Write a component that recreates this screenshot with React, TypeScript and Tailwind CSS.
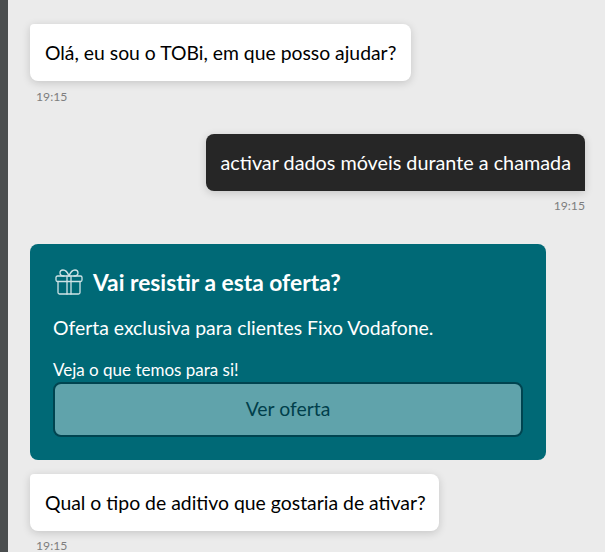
const font = "font-['Lato','Noto_Sans',sans-serif]";

function GiftIcon() {
  return (
    <svg width="30" height="28" viewBox="0 0 30 28" fill="none" stroke="#cfe3e6" strokeWidth="1.3" strokeLinejoin="round" strokeLinecap="round">
      <rect x="2" y="8" width="26" height="5.5" rx="1.5" />
      <path d="M4 13.5V24.5a1.5 1.5 0 0 0 1.5 1.500h19a1.500 1.500 0 0 0 1.500-1.500V13.500" />
      <path d="M13 8v18M17 8v18" />
      <path d="M15 8C13.500 4 11 2 9 2 7.200 2 6 3.300 6 5c0 2 2 3 4 3" />
      <path d="M15 8c1.500-4 4-6 6-6 1.800 0 3 1.300 3 3 0 2-2 3-4 3" />
    </svg>
  );
}

export default function App() {
  return (
    <div className={`flex h-[552px] w-[605px] overflow-hidden bg-[#ebebeb] ${font}`}>
      <div className="w-2 shrink-0 bg-[#4a4d4e]" />
      <div className="flex min-w-0 flex-1 flex-col pl-[22px] pt-6">
        <div className="flex h-[57px] w-fit shrink-0 items-center rounded-b-lg rounded-tr-lg rounded-tl-sm bg-white px-[15px] text-[19.35px] text-black shadow-[0_2px_8px_rgba(0,0,0,0.16)]">
          Olá, eu sou o TOBi, em que posso ajudar?
        </div>
        <div className="ml-1.5 mt-2 shrink-0 text-[12.2px] leading-[15px] text-[#7e7e7e]">19:15</div>

        <div className="mt-[30px] flex shrink-0 flex-col items-end pr-5">
          <div className="flex h-[57px] w-fit items-center rounded-t-lg rounded-bl-lg bg-[#262626] px-3.5 text-[19.8px] text-white shadow-[0_2px_8px_rgba(0,0,0,0.16)]">
            activar dados móveis durante a chamada
          </div>
          <div className="mt-[7px] text-[12.2px] leading-[15px] text-[#7e7e7e]">19:15</div>
        </div>

        <div className="mt-[31px] h-[216px] w-[516px] shrink-0 rounded-lg bg-[#006976] px-[23px] pt-6 text-white">
          <div className="flex items-center gap-[9px] pl-px">
            <GiftIcon />
            <span className="text-[22.8px] font-bold leading-7">Vai resistir a esta oferta?</span>
          </div>
          <p className="mt-5 text-[19.4px] leading-6">Oferta exclusiva para clientes Fixo Vodafone.</p>
          <p className="mt-5 text-[17px] leading-5">Veja o que temos para si!</p>
          <button className="mt-0.5 h-[55px] w-full rounded-lg border-2 border-[#004450] bg-[#60a3ab] pb-0.5 text-[19.4px] text-[#003f4b]">
            Ver oferta
          </button>
        </div>

        <div className="mt-3.5 flex h-[57px] w-fit shrink-0 items-center rounded-b-lg rounded-tr-lg rounded-tl-sm bg-white pl-[15px] pr-[13px] text-[19.4px] text-black shadow-[0_2px_8px_rgba(0,0,0,0.16)]">
          Qual o tipo de aditivo que gostaria de ativar?
        </div>
        <div className="ml-1.5 mt-[7px] shrink-0 text-[12.2px] leading-[15px] text-[#7e7e7e]">19:15</div>
      </div>
    </div>
  );
}
